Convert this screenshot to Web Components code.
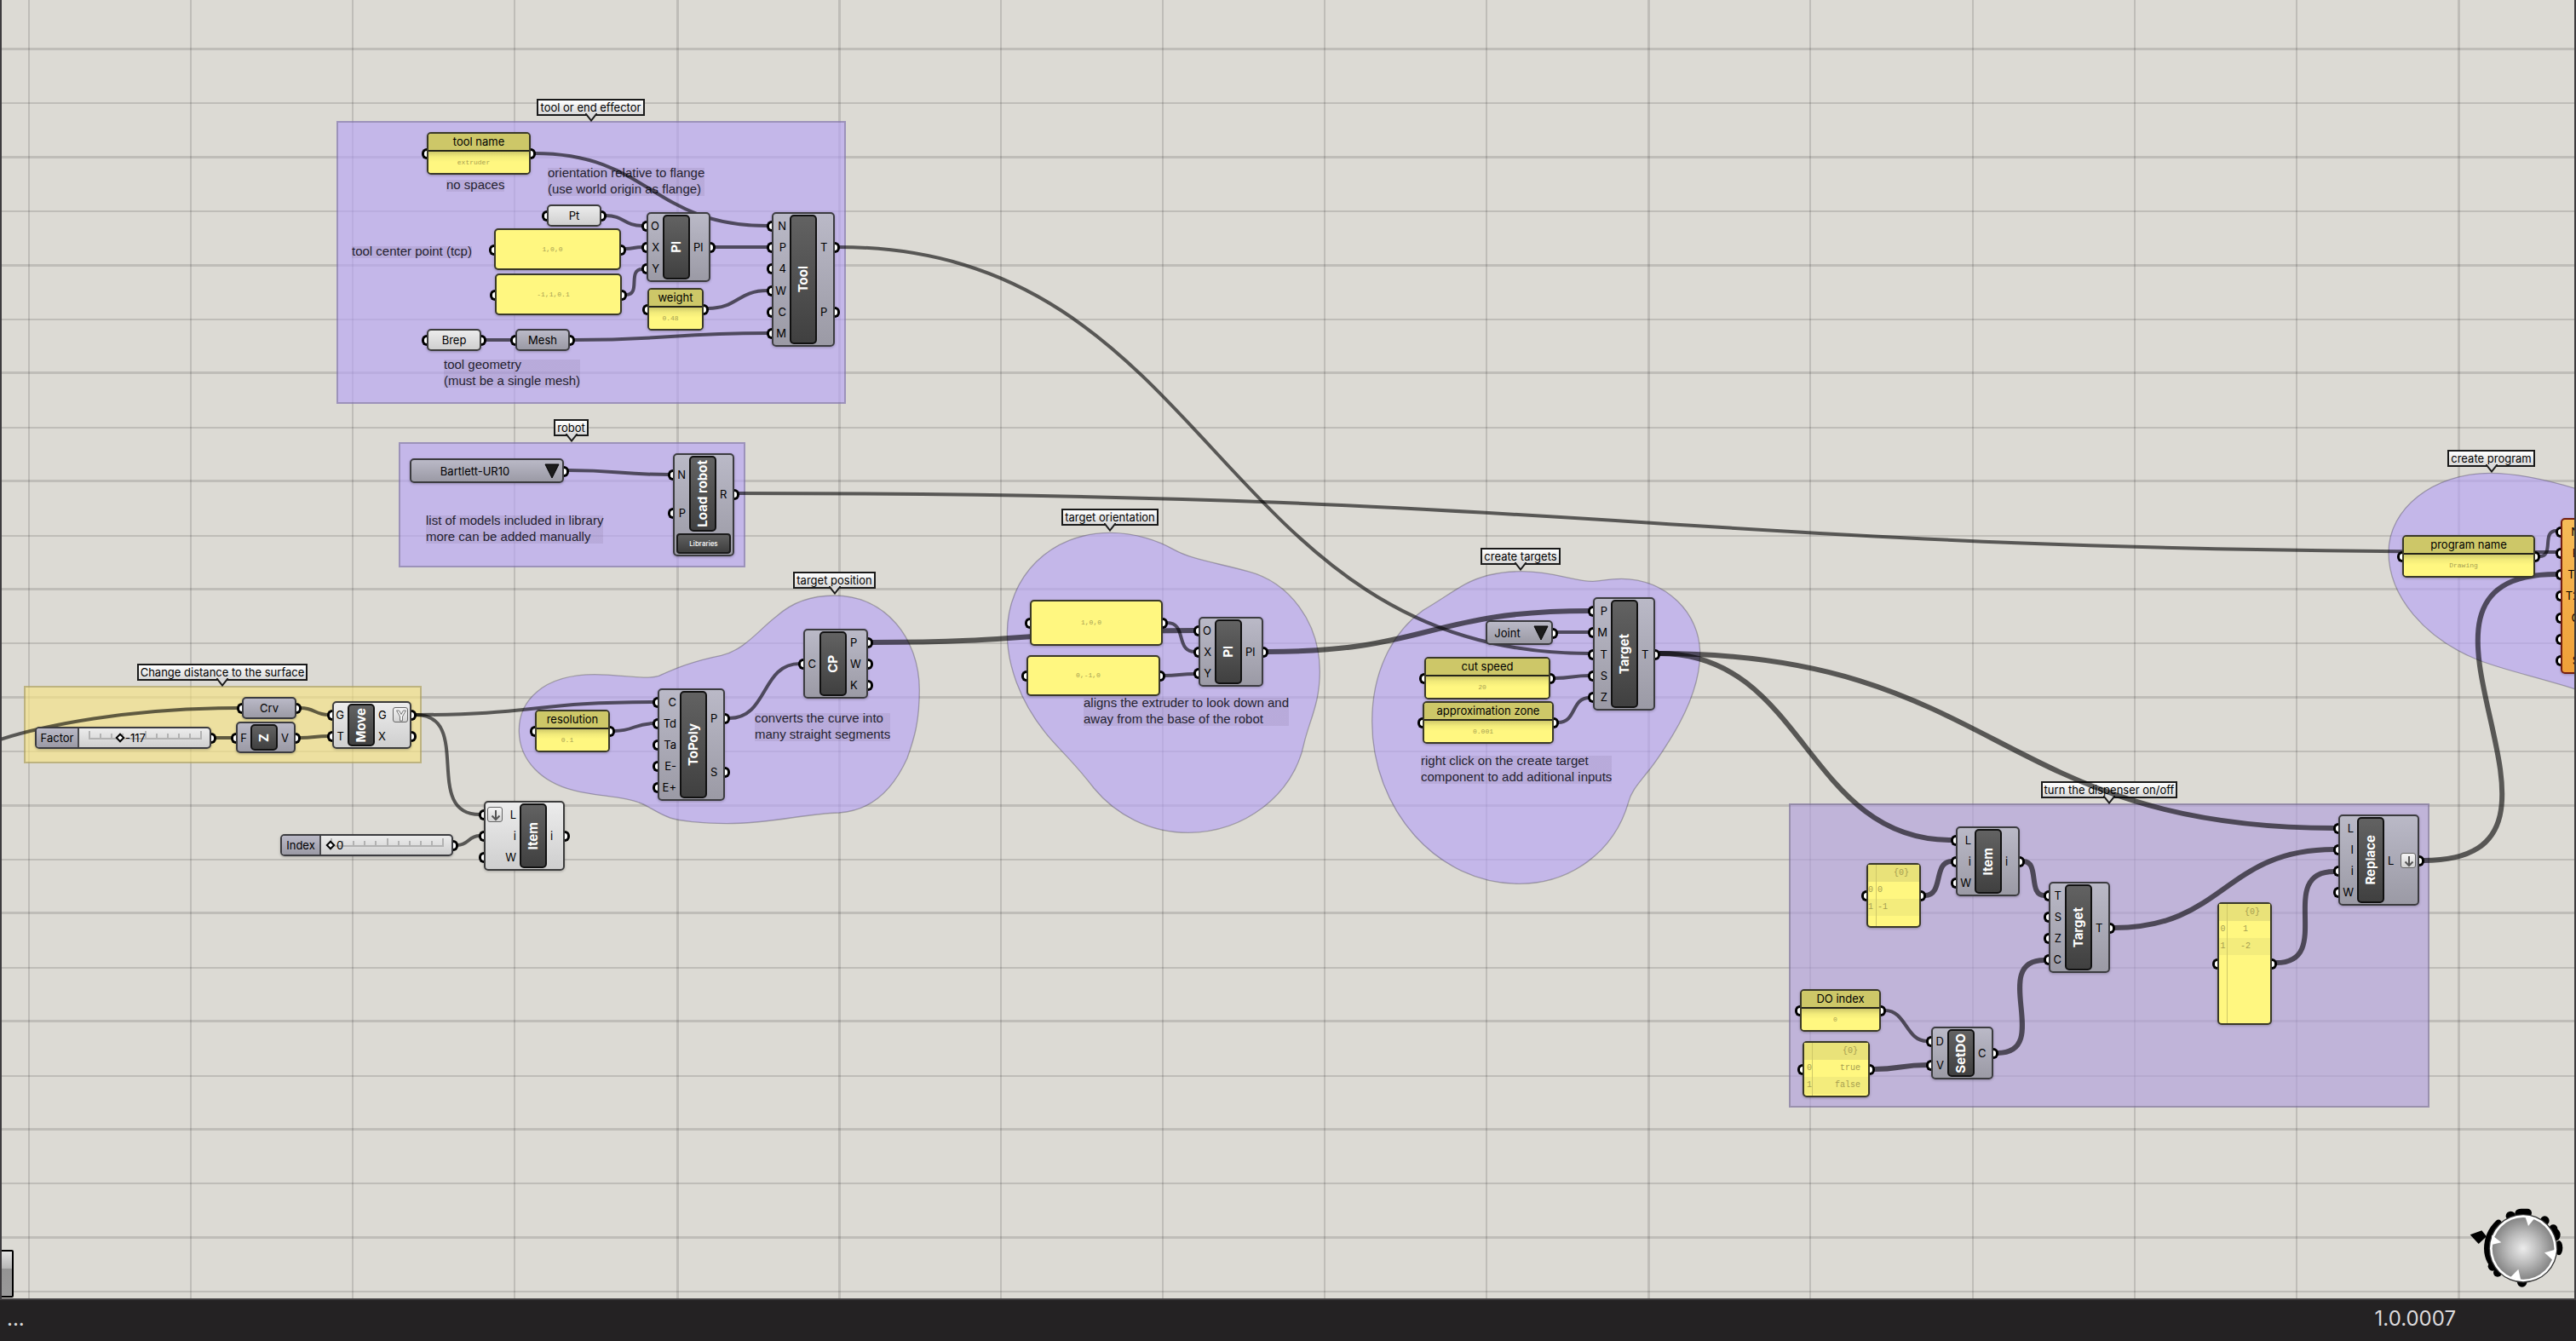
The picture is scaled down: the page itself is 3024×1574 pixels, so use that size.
<!DOCTYPE html>
<html lang="en">
<head>
<meta charset="utf-8">
<title>Robot toolpath definition</title>
<style>
  html, body { height: 100%; margin: 0; }
  body { background: #242223; font-family: Inter, "Liberation Sans", sans-serif; font-size: 13px; color: #000; }
</style>
</head>
<body>
<gh-app>
  <gh-canvas>
    <gh-group x="395" y="142" w="598" h="332"></gh-group>
    <gh-group x="468" y="519" w="407" h="147"></gh-group>
    <gh-group x="28" y="805" w="467" h="91" tone="yellow"></gh-group>
    <gh-group x="2100" y="943" w="752" h="357" tone="grey"></gh-group>
    <gh-blob x="590" y="660" d="M58,597C55,490 140,395 325,395C420,395 500,415 550,400C600,378 660,350 770,328C850,310 900,240 965,190C1020,140 1090,117 1168,117C1350,117 1468,270 1468,450C1468,560 1450,620 1425,690C1375,800 1300,875 1185,882C1060,885 950,920 790,920C700,920 620,910 590,900C540,882 510,855 480,846C420,822 330,825 250,803C140,775 60,700 58,597Z"></gh-blob>
    <gh-blob x="1160" y="580" d="M67,490C67,290 220,136 430,136C520,136 600,165 650,193C720,232 800,240 915,272C1060,310 1168,450 1168,625C1168,740 1130,800 1112,880C1075,1060 900,1192 705,1192C570,1192 450,1130 372,1035C300,940 240,890 200,838C110,725 67,600 67,490Z"></gh-blob>
    <gh-blob x="1590" y="630" d="M62,650C62,480 130,340 240,260C300,225 340,195 390,167C450,135 520,122 590,122C700,122 780,158 840,157C870,156 890,148 940,148C1100,150 1217,270 1217,410C1217,500 1180,600 1120,700C1080,765 1060,795 1035,825C1000,870 975,895 965,935C915,1110 760,1222 580,1222C290,1222 62,960 62,650Z"></gh-blob>
    <gh-blob x="2780" y="510" d="M72,415C72,260 230,136 430,136C530,136 630,160 730,190L900,245L900,950L730,897C600,855 480,830 390,795C200,720 72,570 72,415Z"></gh-blob>

    <gh-tag x="630" y="116" w="127">tool or end effector</gh-tag>
    <gh-tag x="650" y="492" w="41">robot</gh-tag>
    <gh-tag x="161" y="779" w="200">Change distance to the surface</gh-tag>
    <gh-tag x="931" y="671" w="97">target position</gh-tag>
    <gh-tag x="1246" y="597" w="114">target orientation</gh-tag>
    <gh-tag x="1738" y="643" w="94">create targets</gh-tag>
    <gh-tag x="2396" y="917" w="160">turn the dispenser on/off</gh-tag>
    <gh-tag x="2873" y="528" w="103">create program</gh-tag>

    <gh-note x="524" y="207">no spaces</gh-note>
    <gh-note x="643" y="193">orientation relative to flange<br>(use world origin as flange)</gh-note>
    <gh-note x="413" y="285">tool center point (tcp)</gh-note>
    <gh-note x="521" y="418">tool geometry<br>(must be a single mesh)</gh-note>
    <gh-note x="500" y="601">list of models included in library<br>more can be added manually</gh-note>
    <gh-note x="886" y="833">converts the curve into<br>many straight segments</gh-note>
    <gh-note x="1272" y="815">aligns the extruder to look down and<br>away from the base of the robot</gh-note>
    <gh-note x="1668" y="883">right click on the create target<br>component to add aditional inputs</gh-note>

    <gh-wire d="M0,868C50,852 150,831 279,831"></gh-wire>
    <gh-wire from="627,180" to="901,265"></gh-wire>
    <gh-wire from="711,253" to="754,265"></gh-wire>
    <gh-wire from="734,292" to="754,290"></gh-wire>
    <gh-wire from="735,346" to="754,316" bend="18"></gh-wire>
    <gh-wire from="838,290" to="901,290"></gh-wire>
    <gh-wire from="831,362" to="901,341"></gh-wire>
    <gh-wire from="570,399" to="601,399"></gh-wire>
    <gh-wire from="674,399" to="901,391"></gh-wire>
    <gh-wire from="667,552" to="786,557"></gh-wire>
    <gh-wire from="867,579" to="3001,648"></gh-wire>
    <gh-wire from="984,290" to="1866,767"></gh-wire>
    <gh-wire from="353,831" to="386,839"></gh-wire>
    <gh-wire from="253,866" to="273,866"></gh-wire>
    <gh-wire from="352,866" to="386,864"></gh-wire>
    <gh-wire from="488,839" to="768,824"></gh-wire>
    <gh-wire from="488,839" to="563,956" bend="68"></gh-wire>
    <gh-wire from="537,992" to="563,981"></gh-wire>
    <gh-wire from="721,858" to="768,849"></gh-wire>
    <gh-wire from="856,843" to="939,779" bend="46"></gh-wire>
    <gh-wire from="1024,754" to="1403,740" list></gh-wire>
    <gh-wire from="1370,731" to="1403,765" bend="24"></gh-wire>
    <gh-wire from="1366,793" to="1403,791"></gh-wire>
    <gh-wire from="1488,765" to="1866,717" list></gh-wire>
    <gh-wire from="1828,742" to="1866,742"></gh-wire>
    <gh-wire from="1825,796" to="1866,793"></gh-wire>
    <gh-wire from="1829,848" to="1866,819" bend="22"></gh-wire>
    <gh-wire from="1948,767" to="2291,986" list></gh-wire>
    <gh-wire from="1948,767" to="2740,972" list></gh-wire>
    <gh-wire from="2260,1051" to="2291,1011" bend="22" list></gh-wire>
    <gh-wire from="2375,1011" to="2400,1051" bend="20" list></gh-wire>
    <gh-wire from="2213,1186" to="2262,1222"></gh-wire>
    <gh-wire from="2200,1255" to="2262,1250" list></gh-wire>
    <gh-wire from="2345,1236" to="2400,1127" bend="66" list></gh-wire>
    <gh-wire from="2482,1089" to="2740,997" list></gh-wire>
    <gh-wire from="2672,1130" to="2740,1023" bend="70" list></gh-wire>
    <gh-wire from="2845,1010" to="3001,674" bend="232" list></gh-wire>
    <gh-wire from="2981,653" to="3001,623" bend="18"></gh-wire>

    <gh-panel x="501" y="155" w="122" h="50" heading="tool name">extruder</gh-panel>
    <gh-param x="642" y="240" w="64" tone="light">Pt</gh-param>
    <gh-panel x="580" y="268" w="149" h="49">1,0,0</gh-panel>
    <gh-panel x="581" y="321" w="149" h="49">-1,1,0.1</gh-panel>
    <gh-component x="759" y="249" w="75" h="82" stem="19" inputs="O,X,Y" outputs="Pl">Pl</gh-component>
    <gh-panel x="760" y="338" w="66" h="50" heading="weight">0.48</gh-panel>
    <gh-component x="906" y="249" w="74" h="158" stem="21" inputs="N,P,4,W,C,M" outputs="T,P">Tool</gh-component>
    <gh-param x="501" y="386" w="64" tone="light">Brep</gh-param>
    <gh-param x="605" y="386" w="64">Mesh</gh-param>

    <gh-list x="481" y="538" w="181" label="Robot model">Bartlett-UR10</gh-list>
    <gh-component x="790" y="532" w="72" h="121" stem="19" inputs="N,P" outputs="R" action="Libraries">Load robot</gh-component>

    <gh-param x="284" y="818" w="64">Crv</gh-param>
    <gh-slider x="41" y="853" w="207" name-width="50" label="Factor" min="-200" max="100" value="-117"></gh-slider>
    <gh-component x="277" y="847" w="70" h="37" stem="17" inputs="F" outputs="V">Z</gh-component>
    <gh-component x="390" y="823" w="93" h="56" stem="18" inputs="G,T" outputs="G:graft,X" tone="light">Move</gh-component>
    <gh-slider x="329" y="979" w="203" name-width="46" label="Index" min="0" max="10" value="0"></gh-slider>
    <gh-component x="568" y="940" w="95" h="82" stem="42" inputs="L:flatten,i,W" outputs="i" tone="light">Item</gh-component>

    <gh-panel x="628" y="833" w="88" h="50" heading="resolution">0.1</gh-panel>
    <gh-component x="772" y="808" w="79" h="132" stem="26" inputs="C,Td,Ta,E-,E+" outputs="P,S">ToPoly</gh-component>
    <gh-component x="943" y="738" w="76" h="82" stem="19" inputs="C" outputs="P,W,K">CP</gh-component>

    <gh-panel x="1209" y="704" w="156" h="54">1,0,0</gh-panel>
    <gh-panel x="1205" y="769" w="157" h="48">0,-1,0</gh-panel>
    <gh-component x="1407" y="724" w="76" h="82" stem="19" inputs="O,X,Y" outputs="Pl">Pl</gh-component>

    <gh-list x="1744" y="728" w="79" label="Motion type">Joint</gh-list>
    <gh-panel x="1672" y="771" w="148" h="50" heading="cut speed">20</gh-panel>
    <gh-panel x="1670" y="823" w="154" h="50" heading="approximation zone">0.001</gh-panel>
    <gh-component x="1870" y="701" w="73" h="133" stem="21" inputs="P,M,T,S,Z" outputs="T">Target</gh-component>

    <gh-panel x="2191" y="1013" w="64" h="76" rows="0,-1" align="left"></gh-panel>
    <gh-component x="2296" y="970" w="75" h="82" stem="22" inputs="L,i,W" outputs="i">Item</gh-component>
    <gh-component x="2405" y="1035" w="72" h="107" stem="19" inputs="T,S,Z,C" outputs="T">Target</gh-component>
    <gh-panel x="2113" y="1161" w="95" h="50" heading="DO index">0</gh-panel>
    <gh-panel x="2116" y="1222" w="79" h="66" rows="true,false" align="right"></gh-panel>
    <gh-component x="2267" y="1205" w="73" h="62" stem="19" inputs="D,V" outputs="C">SetDO</gh-component>
    <gh-panel x="2603" y="1059" w="64" h="144" rows="1,-2" align="center"></gh-panel>
    <gh-component x="2745" y="956" w="95" h="107" stem="22" inputs="L,I,i,W" outputs="L:flatten">Replace</gh-component>

    <gh-panel x="2820" y="628" w="156" h="50" heading="program name">Drawing</gh-panel>
    <gh-component x="3006" y="608" w="80" h="183" stem="26" inputs="N,R,T1,T2,C, ,S" outputs="P" tone="warning"></gh-component>

    <gh-dock></gh-dock>
    <gh-compass></gh-compass>
  </gh-canvas>
  <gh-status>1.0.0007</gh-status>
</gh-app>

<script>
const PORT_CSS = `
  .grip { position: absolute; box-sizing: border-box; width: 6px; height: 13px; top: calc(50% - 6px); background: #fff; border: 3px solid #000; }
  .grip.in { border-right: 0; border-radius: 7px 0 0 7px; }
  .grip.out { border-left: 0; border-radius: 0 7px 7px 0; }`;

const TONES = {
  dark: ['#bab9c7', '#9b9aa5', '#3c3c40'],
  light: ['#ececec', '#cfcfcf', '#3c3c3c'],
  warning: ['#f6bb58', '#ef9f38', '#741f12']
};

/* Base for everything that has a place of its own on the canvas. */
class Placed extends HTMLElement {
  connectedCallback() {
    const s = this.style;
    s.left = this.num('x') + 'px';
    s.top = this.num('y') + 'px';
    if (this.hasAttribute('w')) s.width = this.num('w') + 'px';
    if (this.hasAttribute('h')) s.height = this.num('h') + 'px';
    const tone = TONES[this.getAttribute('tone')] || TONES.dark;
    s.setProperty('--top', tone[0]);
    s.setProperty('--bottom', tone[1]);
    s.setProperty('--edge', tone[2]);
    this.attachShadow({ mode: 'open' }).innerHTML =
      `<style>:host { position: absolute; display: block; box-sizing: border-box; }</style>` + this.render();
  }
  num(name) { return Number(this.getAttribute(name) || 0); }
}

const BODY_CSS = `
  :host { border: 2px solid var(--edge); border-radius: 5px; background: linear-gradient(var(--top), var(--bottom));
    box-shadow: 0 1px 3px rgba(0,0,0,.25); font: 13px/18px Inter, "Liberation Sans", sans-serif; }`;

customElements.define('gh-app', class extends HTMLElement {
  constructor() {
    super();
    this.attachShadow({ mode: 'open' }).innerHTML = `<style>
      :host { display: flex; flex-direction: column; height: 100vh; }
    </style><slot></slot>`;
  }
});

customElements.define('gh-canvas', class extends HTMLElement {
  constructor() {
    super();
    let lines = '';
    for (let i = 0; i < 24; i++) {
      const x = Math.round(33 + i * 2852 / 15);
      lines += `<rect x="${x}" y="0" width="${[4, 5, 10, 15].includes(i) ? 3 : 2}" height="100%"/>`;
    }
    for (let k = 0; k < 36; k++) {
      const y = Math.round(57 + k * 317 / 5) - (k % 2 ? 0 : 1);
      lines += `<rect x="0" y="${y}" width="100%" height="${k % 2 ? 2 : 3}"/>`;
    }
    this.attachShadow({ mode: 'open' }).innerHTML = `<style>
      :host { display: block; position: relative; flex: 1; overflow: hidden; background: #dcdad4; }
      svg { position: absolute; inset: 0; width: 100%; height: 100%; fill: rgba(0,0,0,.13); }
      .frame { position: absolute; inset: 0; border: solid #3d3b3e; border-width: 0 2px; pointer-events: none; }
    </style><svg aria-hidden="true">${lines}</svg><slot></slot><div class="frame"></div>`;
  }
});

const FILLS = { violet: 'rgba(183,164,244,.65)', yellow: 'rgba(246,227,132,.65)', grey: 'rgba(177,160,220,.65)' };

customElements.define('gh-group', class extends Placed {
  render() {
    return `<style>:host { background: ${FILLS[this.getAttribute('tone')] || FILLS.violet}; border: 2px solid rgba(0,0,0,.2); background-clip: border-box; }</style>`;
  }
});

/* Free-form group; its outline is drawn at three units to the pixel. */
customElements.define('gh-blob', class extends Placed {
  render() {
    return `<style>svg { display: block; overflow: visible; }</style>
      <svg width="1" height="1" viewBox="0 0 3 3" aria-hidden="true"><path d="${this.getAttribute('d')}" fill="${FILLS.violet}" stroke="rgba(0,0,0,.25)" stroke-width="4"/></svg>`;
  }
});

customElements.define('gh-tag', class extends Placed {
  render() {
    return `<style>
      :host { height: 20px; border: 2px solid #1a1a1a; background: linear-gradient(#fff, #d9d9d9); white-space: nowrap;
        font: 13px/17px Inter, "Liberation Sans", sans-serif; display: flex; justify-content: center; }
      svg { position: absolute; top: 15px; left: calc(50% - 7px); }
    </style><slot></slot><svg width="14" height="10" aria-hidden="true"><path d="M1 0L7 8L13 0" fill="#d9d9d9"/><path d="M0 1L1 1L7 8.500L13 1L14 1" fill="none" stroke="#1a1a1a" stroke-width="2"/></svg>`;
  }
});

customElements.define('gh-note', class extends Placed {
  render() {
    return `<style>
      :host { font: 15px/19px "Liberation Sans", Arial, sans-serif; color: #241f30; white-space: nowrap;
        background: linear-gradient(rgba(80,60,90,.1), rgba(80,60,90,.1)) no-repeat 0 4px / 100% calc(100% - 5px); }
    </style><slot></slot>`;
  }
});

customElements.define('gh-wire', class extends Placed {
  render() {
    let d = this.getAttribute('d');
    if (!d) {
      const [x0, y0] = this.getAttribute('from').split(',').map(Number);
      const [x1, y1] = this.getAttribute('to').split(',').map(Number);
      const b = this.num('bend') || (x1 - x0) / 2;
      d = `M${x0},${y0}C${x0 + b},${y0} ${x1 - b},${y1} ${x1},${y1}`;
    }
    return `<style>:host { pointer-events: none; } svg { display: block; overflow: visible; }</style>
      <svg width="1" height="1" aria-hidden="true"><path d="${d}" fill="none" stroke="rgba(0,0,0,.6)" stroke-width="${this.hasAttribute('list') ? 6 : 4}"/></svg>`;
  }
});

customElements.define('gh-param', class extends Placed {
  render() {
    return `<style>${BODY_CSS}${PORT_CSS}
      :host { height: 26px; display: flex; align-items: center; justify-content: center; }
      .in { left: -8px; } .out { right: -8px; }
    </style><i class="grip in"></i><slot></slot><i class="grip out"></i>`;
  }
});

customElements.define('gh-panel', class extends Placed {
  render() {
    const heading = this.getAttribute('heading');
    const rows = this.getAttribute('rows');
    let inner = `<div class="value"><slot></slot></div>`;
    if (rows) {
      inner = `<table><thead><tr><th></th><th class="path">{0}</th></tr></thead><tbody>` +
        rows.split(',').map((v, i) => `<tr><th>${i}</th><td>${v}</td></tr>`).join('') + `</tbody></table><div class="rest"></div>`;
    }
    return `<style>${BODY_CSS}${PORT_CSS}
      :host { --edge: #38371f !important; border-color: #3a3928; background: #fff780; display: flex; flex-direction: column; color: #000; }
      .in { left: -8px; } .out { right: -8px; }
      header { height: 19px; line-height: 19px; text-align: center; background: #cdc768; border-bottom: 2px solid #26251a; border-radius: 3px 3px 0 0; white-space: nowrap; }
      .value { flex: 1; display: flex; align-items: center; justify-content: center; padding-right: 12px; border-radius: 0 0 3px 3px;
        font: 8px/10px "Liberation Mono", monospace; color: #a69e50; }
      header + .value { background: linear-gradient(#d0ca6a, #f2eb7a 6px, #fff780 12px); }
      table { border-collapse: collapse; width: 100%; table-layout: fixed; font: 10px/20px "Liberation Mono", monospace; color: #a69e50; }
      th, td { padding: 0; height: 20px; font-weight: 400; }
      th:first-child { width: 9px; border-right: 1px solid #cfc868; }
      thead { background: #e9e279; }
      tbody tr:nth-child(2) { background: #f3ec7c; }
      .path { text-align: right; padding-right: 12px; }
      td { text-align: ${this.getAttribute('align')}; padding: 0 9px 0 1px; }
      .rest { flex: 1; margin-left: 9px; border-left: 1px solid #cfc868; }
    </style><i class="grip in"></i><i class="grip out"></i>${heading ? `<header>${heading}</header>` : ''}${inner}`;
  }
});

const ICONS = {
  flatten: '<path d="M9 3V14M4.500 9.500L9 14L13.500 9.500" fill="none" stroke="#555" stroke-width="2"/>',
  graft: '<path d="M3.500 3H6.500L9 7.500L11.500 3H14.500L10.500 10V15H7.500V10Z" fill="#f4f4f4" stroke="#777" stroke-width="1"/>'
};

customElements.define('gh-component', class extends Placed {
  ports(list, side) {
    return list.split(',').map(p => {
      const [name, icon] = p.split(':');
      const svg = icon ? `<svg class="icon" width="18" height="18" aria-hidden="true">${ICONS[icon]}</svg>` : '';
      const text = `<span>${name}</span>`;
      return `<div class="port"><i class="grip ${side}"></i>${side === 'in' ? svg + text : text + svg}</div>`;
    }).join('');
  }
  render() {
    const action = this.getAttribute('action');
    return `<style>${BODY_CSS}${PORT_CSS}
      :host { display: flex; flex-direction: column; padding: 1px; }
      .row { flex: 1; display: flex; min-height: 0; }
      .col { display: flex; flex-direction: column; }
      .col.left { width: ${this.num('stem') - 3}px; }
      .col.right { flex: 1; }
      .port { flex: 1; position: relative; display: flex; align-items: center; white-space: nowrap; }
      .left .port { justify-content: flex-end; padding-right: 4px; }
      .right .port { justify-content: space-between; padding-left: 4px; }
      .left .icon { margin-right: auto; }
      .icon { box-sizing: border-box; border: 1px solid #666; border-radius: 3px; background: linear-gradient(#f4f4f4, #d4d4d4); margin: 0 1px; flex: none; }
      .in { left: -9px; } .out { right: -9px; }
      .name { box-sizing: border-box; width: 32px; border: 2px solid #111; border-radius: 5px; background: linear-gradient(#626262, #404040);
        color: #fff; font: 700 15px/18px Inter, "Liberation Sans", sans-serif; display: flex; align-items: center; justify-content: center; }
      .name span { writing-mode: vertical-rl; transform: rotate(180deg); white-space: nowrap; }
      button { height: 24px; margin: 2px 1px 0; padding: 0; border: 2px solid #1a1a1a; border-radius: 4px; background: linear-gradient(#606060, #3e3e3e);
        color: #fff; font: 500 8px/12px Inter, "Liberation Sans", sans-serif; }
    </style>
    <div class="row"><div class="col left">${this.ports(this.getAttribute('inputs'), 'in')}</div>
      <div class="name"><span><slot></slot></span></div>
      <div class="col right">${this.ports(this.getAttribute('outputs'), 'out')}</div></div>
    ${action ? `<button type="button">${action}</button>` : ''}`;
  }
});

customElements.define('gh-list', class extends Placed {
  render() {
    const text = this.textContent;
    return `<style>${BODY_CSS}${PORT_CSS}
      :host { height: 29px; display: flex; }
      select { appearance: none; flex: 1; min-width: 0; border: 0; margin: 0; padding: 0 28px 0 0; background: none; color: #000;
        font: inherit; text-align: center; text-align-last: center; }
      svg { position: absolute; right: 3px; top: 4px; pointer-events: none; }
      .out { right: -8px; }
    </style><i class="grip out"></i>
    <select aria-label="${this.getAttribute('label')}"><option>${text}</option></select>
    <svg width="18" height="18" aria-hidden="true"><path d="M1 1H17L9 17Z" fill="#1c1c1c" stroke="#000"/></svg>`;
  }
});

customElements.define('gh-slider', class extends Placed {
  render() {
    const nameWidth = this.num('name-width');
    const label = this.getAttribute('label');
    const min = this.num('min'), max = this.num('max'), value = this.num('value');
    const at = Math.round((value - min) / (max - min) * 131);
    let ticks = '';
    for (let i = 0; i <= 10; i++) {
      const tall = i % 5 === 0 ? 8 : 5;
      ticks += `<rect x="${Math.round(i * 131 / 10)}" y="${10 - tall}" width="2" height="${tall + 2}"/>`;
    }
    return `<style>${BODY_CSS}${PORT_CSS}
      :host { --top: #ececec !important; --bottom: #cfcfcf; height: 26px; display: flex; background: linear-gradient(#ececec, #cfcfcf); }
      label { box-sizing: border-box; width: ${nameWidth}px; border-right: 2px solid #4a4a4e; border-radius: 3px 0 0 3px;
        background: linear-gradient(#bab9c7, #9b9aa5); line-height: 22px; text-align: center; }
      .track { position: relative; flex: 1; display: flex; align-items: center; padding-left: 6px; }
      svg { position: absolute; left: 11px; top: 1px; fill: #b2b2b2; }
      input { appearance: none; position: relative; width: 141px; height: 22px; margin: 0; background: none; }
      input::-webkit-slider-thumb { appearance: none; box-sizing: border-box; width: 8px; height: 8px; border: 2px solid #000; background: #fff; transform: rotate(45deg); margin: 0 1px; }
      output { position: absolute; left: ${11 + at + 7}px; top: 0; line-height: 22px; }
      .out { right: -8px; }
    </style><label for="s">${label}</label>
    <div class="track"><svg width="133" height="14" aria-hidden="true"><rect x="0" y="10" width="133" height="2"/>${ticks}</svg>
      <input id="s" type="range" min="${min}" max="${max}" value="${value}"><output for="s">${value}</output></div>
    <i class="grip out"></i>`;
  }
});

/* The end of a docked widget that peeks in at the lower left corner. */
customElements.define('gh-dock', class extends HTMLElement {
  constructor() {
    super();
    this.attachShadow({ mode: 'open' }).innerHTML = `<style>
      :host { position: absolute; left: 0; bottom: 1px; box-sizing: border-box; width: 16px; height: 56px; border: 2px solid #000; border-radius: 0 2px 2px 0;
        background: linear-gradient(#e2e2e2, #b6b6b6 20px, #949494 20px, #999); }
    </style>`;
  }
});

customElements.define('gh-compass', class extends HTMLElement {
  constructor() {
    super();
    this.attachShadow({ mode: 'open' }).innerHTML = `<style>
      :host { position: absolute; right: 14px; bottom: 12px; width: 112px; height: 95px; }
      svg { display: block; width: 112px; height: 95px; }
    </style><svg viewBox="535 140 336 285" aria-hidden="true">
      <defs><radialGradient id="g"><stop offset="0" stop-color="#ececec"/><stop offset=".5" stop-color="#bcbcbc"/><stop offset="1" stop-color="#858585"/></radialGradient></defs>
      <path d="M540 237L581 222L598 243L570 269Z"/>
      <path d="M640 196A126 126 0 0 0 601 285Q601 310 612 330" fill="none" stroke="#000" stroke-width="24" stroke-linecap="round"/>
      <circle cx="683" cy="171" r="17"/><circle cx="714" cy="162" r="16"/><rect x="705" y="145" width="52" height="30" rx="15"/>
      <circle cx="803" cy="187" r="16"/><circle cx="833" cy="216" r="15"/><ellipse cx="842" cy="237" rx="16" ry="21"/>
      <ellipse cx="853" cy="283" rx="13" ry="26"/><ellipse cx="723" cy="405" rx="17" ry="16"/>
      <circle cx="637" cy="370" r="15"/><circle cx="619" cy="348" r="16"/>
      <circle cx="727" cy="285" r="121" fill="#333"/><circle cx="727" cy="285" r="117" fill="#fff"/>
      <circle cx="727" cy="285" r="109" fill="url(#g)"/>
      <path d="M734 172L769 177L745 206ZM617 238L650 264L616 272ZM845 288L802 300L834 329ZM710 358L719 397L682 387Z" fill="#fff"/>
    </svg>`;
  }
});

customElements.define('gh-status', class extends HTMLElement {
  constructor() {
    super();
    this.attachShadow({ mode: 'open' }).innerHTML = `<style>
      :host { display: flex; justify-content: space-between; box-sizing: border-box; height: 50px; padding: 0 141px 0 8px;
        background: #242223; border-top: 2px solid #3f3d3f; color: #dcdadc; font: 24px/44px Inter, "Liberation Sans", sans-serif; }
    </style><span>...</span><span><slot></slot></span>`;
  }
});
</script>
</body>
</html>
